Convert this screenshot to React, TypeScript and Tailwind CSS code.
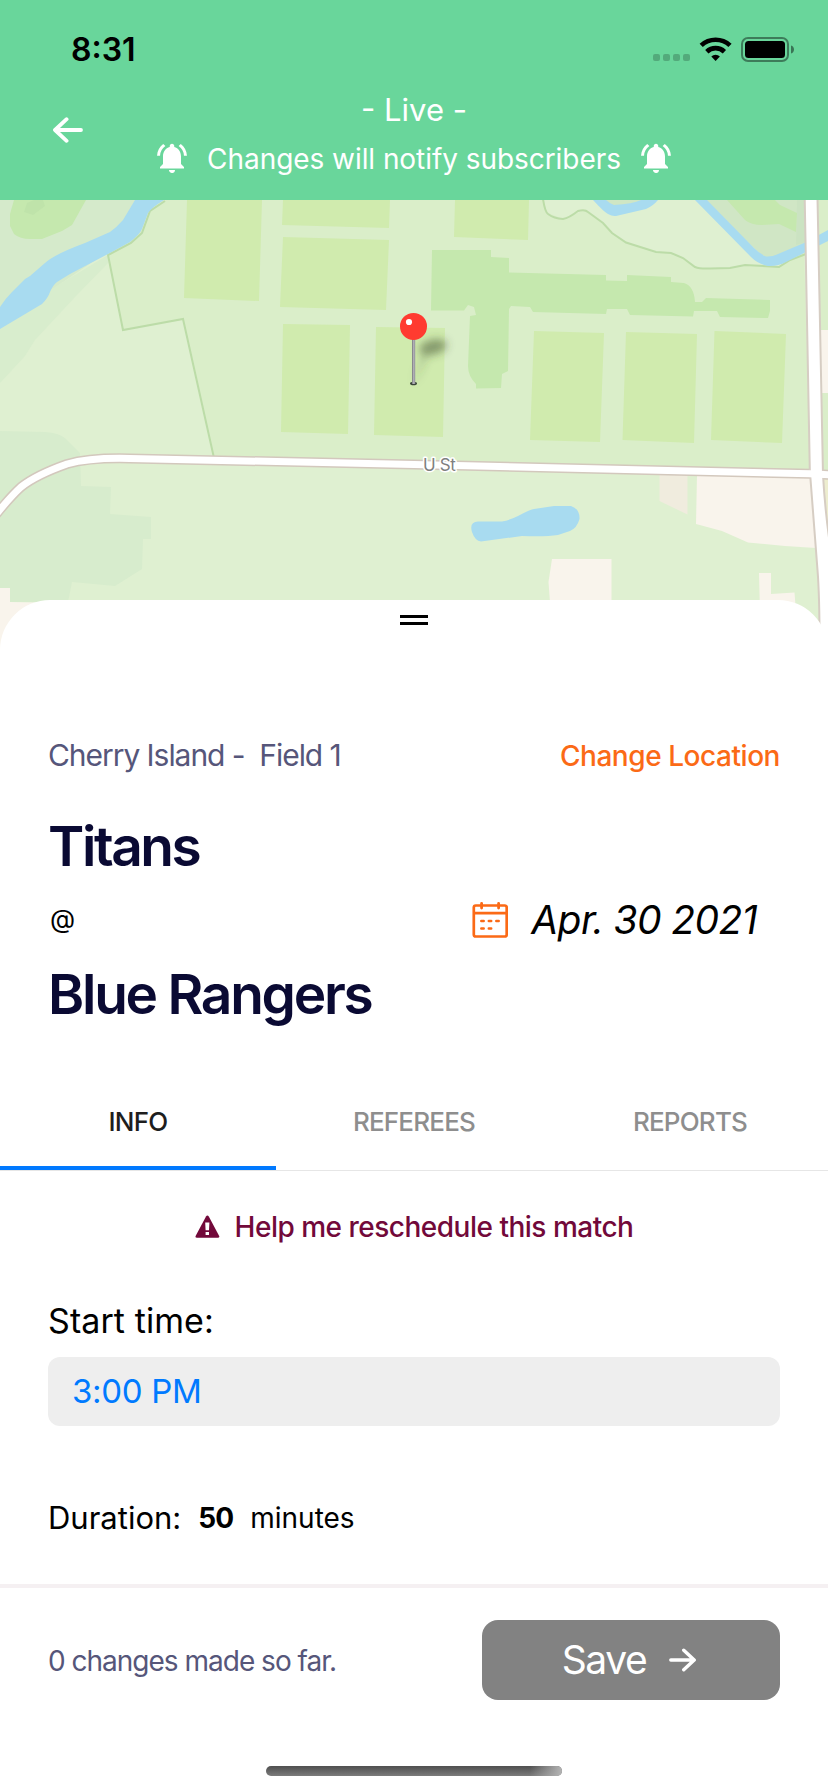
import React from "react";
import { MdNotificationsActive } from "react-icons/md";

function StatusIcons() {
  return (
    <svg width="144" height="28" viewBox="652 35 144 28" className="block" aria-hidden="true">
      <g fill="#000" opacity="0.2">
        <rect x="653" y="54" width="7" height="7" rx="2" />
        <rect x="663" y="54" width="7" height="7" rx="2" />
        <rect x="673" y="54" width="7" height="7" rx="2" />
        <rect x="683" y="54" width="7" height="7" rx="2" />
      </g>
      <g fill="none" stroke="#000" strokeWidth="4.7">
        <path d="M701.2 45.4A21.2 21.2 0 0 1 730 45.4" />
        <path d="M706.8 51.7A12.7 12.7 0 0 1 724.4 51.7" />
      </g>
      <path d="M715.6 61L711.3 56.4A6.3 6.3 0 0 1 719.9 56.4Z" />
      <rect x="742" y="38" width="46" height="23" rx="6" fill="none" stroke="#000" strokeOpacity="0.42" strokeWidth="2" />
      <rect x="745" y="41" width="40" height="17" rx="3.5" />
      <path d="M791 45.5C795 46.5 795 52.5 791 53.5Z" fillOpacity="0.45" />
    </svg>
  );
}

function ArrowIcon({ className }: { className: string }) {
  return (
    <svg viewBox="0 0 30 26" fill="none" stroke="currentColor" strokeWidth="3.8" strokeLinecap="round" strokeLinejoin="round" className={className} aria-hidden="true">
      <path d="M13.6 2.2L2 13L13.6 23.8M2.4 13H28" />
    </svg>
  );
}

function CalendarIcon() {
  return (
    <svg width="36" height="38" viewBox="473 900.5 36 38" fill="none" stroke="#fb6a16" strokeLinecap="round" className="block" aria-hidden="true">
      <rect x="474.8" y="905" width="32.9" height="31" rx="2" strokeWidth="2.7" />
      <path d="M475 912.6H508" strokeWidth="2.7" strokeLinecap="butt" />
      <path d="M482.6 902.8V907.5M499.6 902.8V907.5" strokeWidth="2.8" />
      <path d="M482.3 920.4H484.7M489.8 920.4H492.2M497.3 920.4H499.7M482.3 928H484.7M489.8 928H492.2" strokeWidth="2.5" />
    </svg>
  );
}

function WarningIcon() {
  return (
    <svg width="25" height="24" viewBox="0 0 25 24" className="block" aria-hidden="true">
      <path d="M11 1.4Q12.4 -0.6 13.8 1.4L24.2 21Q24.8 22.8 22.800 22.800H2Q0 22.800 0.6 21Z" fill="#72093a" />
      <path d="M10.2 7.4H14.4L14 15.2H10.600Z M10.600 17H14V20H10.600Z" fill="#fff" />
    </svg>
  );
}

const FIELDS = [
  "187,0 262,0 259,101 184,98",
  "283,0 390,0 389,28 282,25",
  "283,37 389,40 386,110 280,107",
  "283,124 350,125 348,234 281,232",
  "376,127 445,128 443,237 374,235",
  "455,0 529,0 528,40 454,37",
  "534,131 604,133 600,242 530,240",
  "626,132 697,134 694,243 622.5,240",
  "714.5,131 786,134 782,243 711,240",
];

function MapView() {
  return (
    <svg width="828" height="460" viewBox="0 0 828 460" className="block shrink-0" role="img">
      <defs>
        <filter id="soft" x="-50%" y="-80%" width="200%" height="260%">
          <feGaussianBlur stdDeviation="4" />
        </filter>
        <linearGradient id="needle" x1="0" x2="1" y1="0" y2="0">
          <stop offset="0" stopColor="#77777c" />
          <stop offset="0.5" stopColor="#b2b2b8" />
          <stop offset="1" stopColor="#8f8f95" />
        </linearGradient>
      </defs>
      <rect width="828" height="460" fill="#dff0d1" />

      <path d="M0 0H140L110 50L0 125Z" fill="#d5eacb" />
      <path d="M0 120L108 55V63L75 97L35 140L25 156L0 183Z" fill="#d8edcd" />
      <path d="M14 0L10 14V26L14 34Q20 39 30 39H42L62 31L72 25L86 0Z" fill="#c5e8ae" />
      <path d="M27 3L34 0H43L45 6L33 15L24 12Z" fill="#bfe3aa" />
      <path d="M155 0L108 55L123 130L183 119L214 259L414 264L810 274L804 52L790 60L779 66L745 65L726 69H700L683 58L671 53L656 52L626 42L612 33L603 24L585 10L563 19L546 12L543 0Z" fill="#daeec9" />
      <path d="M818 0H828V271H822Z" fill="#daeec9" />

      <path d="M165 1L150 11L142 33L131 43L108 55L123 130L183 119L214 258" fill="none" stroke="#bcdca8" strokeWidth="2" />
      <path d="M543 -1Q545 12 548 14Q554 18.500 563 19Q569 18 578 11Q585 9 588 12L603 23L612 33L626 42.500L656 52L671 53L683 58L695 67Q700 69 710 68.500L730 68L745 65L779 67L790 60L806 54" fill="none" stroke="#bcdca8" strokeWidth="2" />

      <path d="M135 0L123 20Q117 27 110 32L85 43Q55 54 45 63L30 76L25 79L12 92Q5 99 0 107V129L42 104Q48 98 50 92Q53 85 57 82L70 74L108 54L130 42Q140 34 142 29L148 13Q151 8 164 0Z" fill="#a8dbf0" />

      {FIELDS.map((points) => (
        <polygon key={points} points={points} fill="#d0ebae" />
      ))}
      <path d="M432 50H491V57L509 58V72.500L606 75V80.500L627 81V75L671 77V82L684 83Q694 86 695 102H702L706 98L770 100V111L768 118L720 117L717 111L694 111L693 116.500L630 115L627 109H607L606 114L533 112L530 107L511 106L509 109L508 171L502 174L501 188L476 188.500V184Q468 176 468 166L470 116L476 115L474 107L468 105L464 110.500H431Z" fill="#c5e8ae" />

      <path d="M605 0L612 8L630 6L648 0Z" fill="#cfe6c4" />
      <path d="M593 0Q604 12 608 14Q612 16.500 616 16L646 9Q653 6 658 0H641Q633 4 614 5Q609 3 606 0Z" fill="#a8dbf0" />
      <path d="M704 0H806V44L770 60L758 52Z" fill="#d0e6c5" />
      <path d="M797 0H806V42L796 45Z" fill="#cbe3c2" />
      <path d="M727 0L745 20Q751 25 762 25L779 24L796 32L797 13L780 5L775 0Z" fill="#c5e8ae" />
      <path d="M695 0H707L754 48Q760 54 766 56.500Q772 57 778 54L804 43L828 30V41L804 53L786 62Q778 66.500 768 66Q758 64 751 57Z" fill="#a8dbf0" />

      <path d="M0 231L45 232Q60 233 66 239L80 253L81 286L111 287L110 314L151 317V339H143L142 369L115 386L72 382L68 402H10V388H0Z" fill="#d7eccd" />
      <path d="M0 388H10V402L68 403V460H0Z" fill="#f9f4ec" />
      <path d="M472 332Q469 322 478 321.500H502Q510 320 518 316Q531 309 534 309L554 306H571Q580 309 579.500 319Q577 328 570 331L558 335Q545 337 522 336L481 341.500Q475 341 472 332Z" fill="#a8dbf0" />
      <polygon points="552,359 611.5,359 611.5,402 550,402 548.5,382" fill="#f9f4ec" />
      <polygon points="659.5,275 687.5,275 687.5,314.500 659.5,301" fill="#f0ecde" />
      <polygon points="697,275 811,277 816,348 785,346 748,342.5 722,331 696,324" fill="#f9f4ec" />
      <polygon points="759,373 771,373 771,394 794.5,392.5 796,412 760,412" fill="#f9f4ec" />
      <rect x="820" y="130" width="8" height="63" fill="#f9f4ec" />
      <rect x="822" y="276" width="6" height="60" fill="#ededcf" />

      <path d="M-6 317Q10 297 21 287Q36 275 67 264Q90 257.500 130 258.500L414 264.500L810 273.800L835 275" fill="none" stroke="#d3c8bd" strokeWidth="10" />
      <path d="M804.700 -2L809.800 270Q815 340 817.500 370Q820 400 819.500 470H840V420L830 345Q825 310 823 275L817.500 -2Z" fill="#fff" stroke="#d6cdc3" strokeWidth="2" />
      <path d="M-6 317Q10 297 21 287Q36 275 67 264Q90 257.500 130 258.500L414 264.500L810 273.800L835 275" fill="none" stroke="#fff" strokeWidth="7" />

      <text x="423" y="271" fontSize="17" fill="#7f8080" stroke="#fff" strokeWidth="3" strokeLinejoin="round" paintOrder="stroke" letterSpacing="-0.4">
        U St
      </text>

      <g filter="url(#soft)" fill="#3d4a2c">
        <ellipse cx="433" cy="147" rx="14" ry="7.500" opacity="0.5" transform="rotate(-12 433 147)" />
        <path d="M414 184L422 154L430 152Z" opacity="0.25" />
      </g>
      <ellipse cx="413.500" cy="183.500" rx="3.500" ry="1.800" fill="#3b463a" />
      <rect x="412" y="136" width="3.200" height="48" fill="url(#needle)" />
      <circle cx="413.500" cy="126.400" r="13.500" fill="#ff3b30" />
      <circle cx="409" cy="122" r="3.100" fill="#fff" />
    </svg>
  );
}

const TABS = [
  { label: "INFO", color: "text-[#1e1e1e]", tracking: "tracking-[-0.7px]" },
  { label: "REFEREES", color: "text-[#8e8e8e]", tracking: "tracking-[-0.8px]" },
  { label: "REPORTS", color: "text-[#8e8e8e]", tracking: "tracking-[-0.8px]" },
];

export default function App() {
  return (
    <div className="flex h-[1792px] w-[828px] flex-col overflow-hidden bg-white font-['Inter','Liberation_Sans',sans-serif] text-black">
      <header className="flex h-[200px] shrink-0 flex-col bg-[#69d69b]">
        <div className="flex h-[90px] items-start justify-between pr-8 pl-[71px]">
          <span className="mt-[30px] text-[32px] leading-10 font-semibold">8:31</span>
          <div className="mt-[35px]">
            <StatusIcons />
          </div>
        </div>
        <div className="grid grid-cols-[136px_1fr_136px] text-white">
          <button className="mt-[27px] ml-[53px] h-[26px] w-[30px]" aria-label="Back">
            <ArrowIcon className="block h-[26px] w-[30px]" />
          </button>
          <div className="flex flex-col items-center">
            <div className="h-10 text-[31px] leading-10">- Live -</div>
            <div className="flex h-14 items-center gap-[17px]">
              <MdNotificationsActive size={36} />
              <span className="pt-px text-[28px] leading-9 tracking-[-0.06px] whitespace-nowrap">Changes will notify subscribers</span>
              <MdNotificationsActive size={36} />
            </div>
          </div>
        </div>
      </header>

      <MapView />

      <main className="relative -mt-[60px] flex grow flex-col rounded-t-[50px] bg-white">
        <div className="flex h-[135px] flex-col items-center gap-1 pt-[15px]">
          <span className="-ml-px h-[3px] w-7 bg-black" />
          <span className="-ml-px h-[3px] w-7 bg-black" />
        </div>

        <section className="flex items-center justify-between px-12">
          <span className="text-[30px] leading-10 tracking-[-1.05px] whitespace-pre text-[#56567a]">{"Cherry Island -  Field 1"}</span>
          <button className="pt-0.5 text-[28px] leading-[38px] font-medium tracking-[-0.45px] text-[#fb6a16]">Change Location</button>
        </section>

        <section className="mt-[39px] px-12">
          <h1 className="text-[55px] leading-[64px] font-semibold tracking-[-2.4px] text-[#0a0a33]">Titans</h1>
          <div className="flex h-[84px] items-center justify-between pr-[23px]">
            <span className="pb-1 pl-0.5 text-[26px]">@</span>
            <div className="flex items-center gap-[23px]">
              <CalendarIcon />
              <span className="text-[39px] leading-[84px] tracking-[-0.6px] whitespace-nowrap italic">Apr. 30 2021</span>
            </div>
          </div>
          <h1 className="text-[55px] leading-[64px] font-semibold tracking-[-2.25px] text-[#0a0a33]">Blue Rangers</h1>
        </section>

        <nav className="mt-[46px] grid h-[99px] shrink-0 grid-cols-3 border-b border-[#e6e6e6]">
          {TABS.map((tab, i) => (
            <button
              key={tab.label}
              className={`flex flex-col items-center justify-between ${tab.color} ${tab.tracking} text-[26px] font-medium`}
            >
              <span className="h-[94px] leading-[99px]">{tab.label}</span>
              {i === 0 && <span className="h-1 w-full bg-[#0079ff]" />}
            </button>
          ))}
        </nav>

        <button className="mt-9 flex h-10 items-center justify-center gap-[15px] text-[#72093a]">
          <WarningIcon />
          <span className="text-[28px] leading-10 font-medium tracking-[-0.5px]">Help me reschedule this match</span>
        </button>

        <section className="flex flex-col px-12">
          <label className="mt-[53px] text-[34px] leading-[42px] tracking-[0.08px]">Start time:</label>
          <div className="mt-[15px] flex h-[69px] items-center rounded-xl bg-[#eeeeee] pl-6 text-[33px] tracking-[-0.3px] text-[#007aff]">3:00 PM</div>
          <div className="mt-[71px] flex h-[42px] items-center">
            <span className="text-[31px]">Duration:</span>
            <span className="ml-[17px] text-[28px] font-bold tracking-[-0.9px]">50</span>
            <span className="ml-[17px] text-[28px]">minutes</span>
          </div>
        </section>

        <footer className="mt-auto h-[208px] border-t-4 border-[#f5f0f2]">
          <div className="flex h-28 items-end justify-between px-12">
            <span className="flex h-20 items-center pt-px text-[28px] tracking-[-1px] text-[#56567a]">0 changes made so far.</span>
            <button className="flex h-20 w-[298px] items-center justify-center gap-[23px] rounded-2xl bg-[#828282] pr-1 text-white">
              <span className="text-[39px] tracking-[-1.4px]">Save</span>
              <ArrowIcon className="h-[24px] w-[27px] -scale-x-100" />
            </button>
          </div>
          <div className="mx-auto mt-[66px] h-2.5 w-[296px] overflow-hidden rounded-full bg-linear-to-b from-[#4f4f4f] to-[#7b7b7b]">
            <div className="ml-auto h-full w-8 bg-linear-to-r from-transparent to-[#b4b4b4]" />
          </div>
        </footer>
      </main>
    </div>
  );
}
